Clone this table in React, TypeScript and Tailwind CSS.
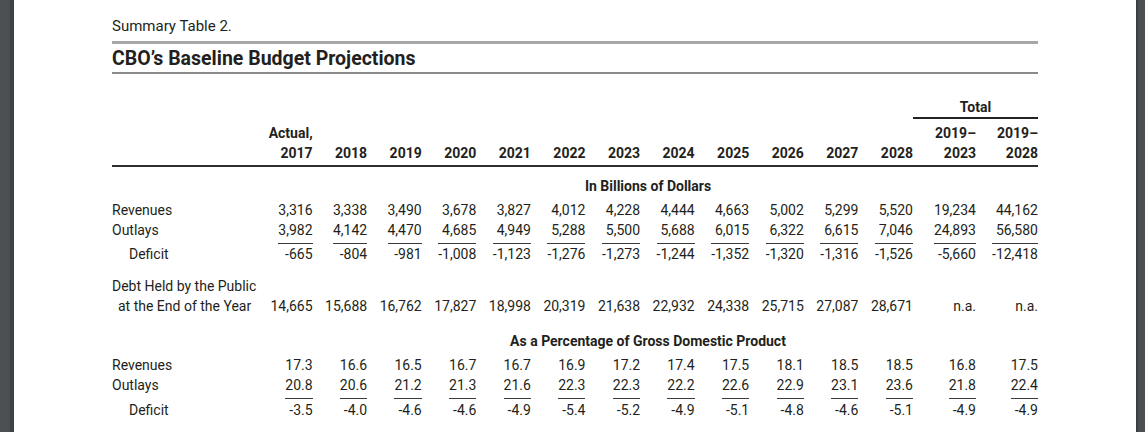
const COLS =
  'grid w-[926px] grid-cols-[146px_repeat(12,minmax(0,1fr))_63px_62px]';

const years = ['2018', '2019', '2020', '2021', '2022', '2023', '2024', '2025', '2026', '2027', '2028'];

const billions = {
  revenues: ['3,316', '3,338', '3,490', '3,678', '3,827', '4,012', '4,228', '4,444', '4,663', '5,002', '5,299', '5,520', '19,234', '44,162'],
  outlays: ['3,982', '4,142', '4,470', '4,685', '4,949', '5,288', '5,500', '5,688', '6,015', '6,322', '6,615', '7,046', '24,893', '56,580'],
  deficit: ['-665', '-804', '-981', '-1,008', '-1,123', '-1,276', '-1,273', '-1,244', '-1,352', '-1,320', '-1,316', '-1,526', '-5,660', '-12,418'],
};

const debt = ['14,665', '15,688', '16,762', '17,827', '18,998', '20,319', '21,638', '22,932', '24,338', '25,715', '27,087', '28,671', 'n.a.', 'n.a.'];

const gdp = {
  revenues: ['17.3', '16.6', '16.5', '16.7', '16.7', '16.9', '17.2', '17.4', '17.5', '18.1', '18.5', '18.5', '16.8', '17.5'],
  outlays: ['20.8', '20.6', '21.2', '21.3', '21.6', '22.3', '22.3', '22.2', '22.6', '22.9', '23.1', '23.6', '21.8', '22.4'],
  deficit: ['-3.5', '-4.0', '-4.6', '-4.6', '-4.9', '-5.4', '-5.2', '-4.9', '-5.1', '-4.8', '-4.6', '-5.1', '-4.9', '-4.9'],
};

function Row({
  label,
  values,
  indent = '',
  className = '',
  height = 'leading-[20px]',
}: {
  label: string;
  values: string[];
  indent?: string;
  className?: string;
  height?: string;
}) {
  return (
    <div className={`${COLS} ${height} ${className}`}>
      <div className={`whitespace-nowrap ${indent}`}>{label}</div>
      {values.map((v, i) => (
        <div key={i} className="text-right whitespace-nowrap">
          {v}
        </div>
      ))}
    </div>
  );
}

// deficit row: rule above each figure, as wide as the wider of the two numbers
function DeficitRow({ outlays, values, height }: { outlays: string[]; values: string[]; height: string }) {
  return (
    <div className={`${COLS} ${height} mt-[2px]`}>
      <div className="pl-[17px] pt-px">Deficit</div>
      {values.map((v, i) => (
        <div key={i} className="flex justify-end">
          <div className="inline-grid border-t border-[#3a3a3a] text-right">
            <span className="invisible col-start-1 row-start-1 h-0 overflow-hidden whitespace-nowrap">
              {outlays[i]}
            </span>
            <span className="col-start-1 row-start-1 whitespace-nowrap">{v}</span>
          </div>
        </div>
      ))}
    </div>
  );
}

export default function App() {
  return (
    <div className="flex h-[432px] w-[1145px] overflow-hidden bg-white font-['Roboto',sans-serif] text-[14px] text-[#231f20]">
      <div className="flex w-[14px] shrink-0">
        <div className="w-[10px] bg-[#4c4f52]" />
        <div className="w-[4px] bg-[#3f4245]" />
      </div>

      <div className="flex-1 bg-white pl-[98px] pt-[16px]">
        <div className="w-[926px]">
          <div className="text-[15px] leading-[20px]">Summary Table 2.</div>
          <div className="mt-[5px] h-[3px] bg-[#a7a7a7]" />
          <div className="border-b-2 border-[#8a8a8a] pt-[2px] text-[19.5px] font-bold leading-[26px] text-[#231f20]">
            CBO’s Baseline Budget Projections
          </div>
        </div>

        {/* header */}
        <div className="mt-[23px] w-[926px] border-b-2 border-[#2e2e2e] pb-[2px] font-bold leading-[20px]">
          <div className={COLS}>
            <div className="col-span-2 col-start-14 border-b-2 border-[#222] text-center">Total</div>
          </div>
          <div className={`${COLS} pt-[4px]`}>
            <div className="col-start-2 text-right">Actual,</div>
            <div className="col-start-14 text-right">2019–</div>
            <div className="col-start-15 text-right">2019–</div>
          </div>
          <div className={COLS}>
            <div className="col-start-2 text-right">2017</div>
            {years.map((y) => (
              <div key={y} className="text-right">
                {y}
              </div>
            ))}
            <div className="text-right">2023</div>
            <div className="text-right">2028</div>
          </div>
        </div>

        <div className={`${COLS} mt-[9px] font-bold leading-[20px]`}>
          <div className="col-span-14 col-start-2 text-center">In Billions of Dollars</div>
        </div>
        <Row label="Revenues" values={billions.revenues} className="mt-[4px]" />
        <Row label="Outlays" values={billions.outlays} height="leading-[21px]" />
        <DeficitRow outlays={billions.outlays} values={billions.deficit} height="leading-[20px]" />

        <Row label="Debt Held by the Public" values={[]} className="mt-[12px]" />
        <Row label="at the End of the Year" values={debt} indent="pl-[6px]" />

        <div className={`${COLS} mt-[15px] font-bold leading-[20px]`}>
          <div className="col-span-14 col-start-2 text-center">As a Percentage of Gross Domestic Product</div>
        </div>
        <Row label="Revenues" values={gdp.revenues} className="mt-[4px]" />
        <Row label="Outlays" values={gdp.outlays} height="leading-[21px]" />
        <DeficitRow outlays={gdp.outlays} values={gdp.deficit} height="leading-[22px]" />
      </div>

      <div className="flex w-[9px] shrink-0">
        <div className="w-[2px] bg-[#3c3f42]" />
        <div className="flex-1 bg-[#4c4f52]" />
      </div>
    </div>
  );
}
